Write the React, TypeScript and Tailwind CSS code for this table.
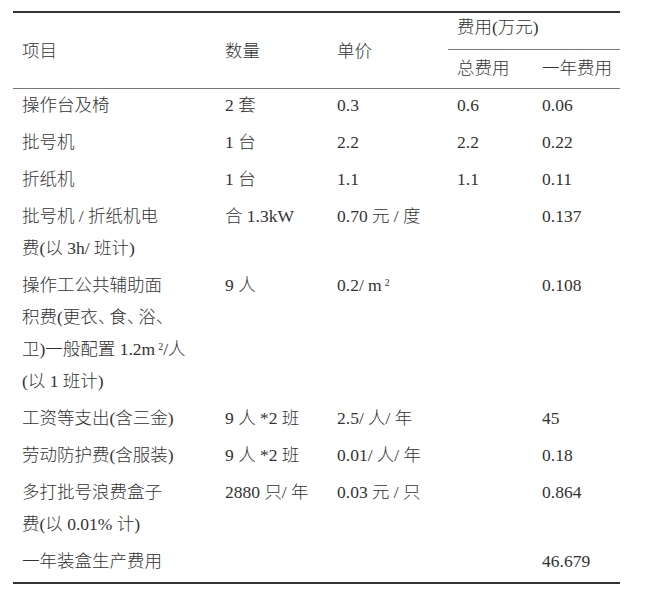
type Row = {
  item: React.ReactNode;
  qty?: React.ReactNode;
  price?: React.ReactNode;
  total?: string;
  year?: string;
};

const Sq = () => <sup className="text-[10px] ml-[3px]">2</sup>;
const Dun = () => <span className="tracking-[-6px]">、</span>;

const rows: Row[] = [
  { item: "操作台及椅", qty: "2 套", price: "0.3", total: "0.6", year: "0.06" },
  { item: "批号机", qty: "1 台", price: "2.2", total: "2.2", year: "0.22" },
  { item: "折纸机", qty: "1 台", price: "1.1", total: "1.1", year: "0.11" },
  {
    item: (
      <>
        批号机 / 折纸机电
        <br />
        费(以 3h/ 班计)
      </>
    ),
    qty: "合 1.3kW",
    price: "0.70 元 / 度",
    year: "0.137",
  },
  {
    item: (
      <>
        操作工公共辅助面
        <br />
        积费(更衣<Dun />食<Dun />浴<Dun />
        <br />
        卫)一般配置 1.2m
        <Sq />
        /人
        <br />
        (以 1 班计)
      </>
    ),
    qty: "9 人",
    price: (
      <>
        0.2/ m
        <Sq />
      </>
    ),
    year: "0.108",
  },
  { item: "工资等支出(含三金)", qty: "9 人 *2 班", price: "2.5/ 人/ 年", year: "45" },
  { item: "劳动防护费(含服装)", qty: "9 人 *2 班", price: "0.01/ 人/ 年", year: "0.18" },
  {
    item: (
      <>
        多打批号浪费盒子
        <br />
        费(以 0.01% 计)
      </>
    ),
    qty: "2880 只/ 年",
    price: "0.03 元 / 只",
    year: "0.864",
  },
  { item: "一年装盒生产费用", year: "46.679" },
];

export default function App() {
  const td = "pl-[9px] pt-0 pb-[5px] align-top whitespace-nowrap";
  const th = "pl-[9px] text-left font-light";
  return (
    <div
      className="w-[646px] h-[594px] bg-white pt-[11px] pl-[13px] text-[#333] text-[17.5px] leading-[32px] font-light"
      style={{ fontFamily: '"Liberation Serif", "Noto Sans CJK SC", serif' }}
    >
      <div className="w-[607px] border-y-2 border-[#333]">
        <table className="w-[607px] table-fixed border-separate border-spacing-0">
          <colgroup>
            <col className="w-[203px]" />
            <col className="w-[112px]" />
            <col className="w-[120px]" />
            <col className="w-[85px]" />
            <col className="w-[87px]" />
          </colgroup>
          <thead>
            <tr>
              <th rowSpan={2} className={`${th} align-middle border-b border-[#777]`}>
                项目
              </th>
              <th rowSpan={2} className={`${th} align-middle border-b border-[#777]`}>
                数量
              </th>
              <th rowSpan={2} className={`${th} align-middle border-b border-[#777]`}>
                单价
              </th>
              <th colSpan={2} className={`${th} pt-0 pb-[8px] leading-[28px] border-b border-[#777]`}>
                费用(万元)
              </th>
            </tr>
            <tr>
              <th className={`${th} pt-[4px] pb-[6px] leading-[28px] border-b border-[#777]`}>总费用</th>
              <th className={`${th} pt-[4px] pb-[6px] leading-[28px] border-b border-[#777]`}>一年费用</th>
            </tr>
          </thead>
          <tbody>
            {rows.map((r, i) => (
              <tr key={i}>
                <td className={td}>{r.item}</td>
                <td className={td}>{r.qty}</td>
                <td className={td}>{r.price}</td>
                <td className={td}>{r.total}</td>
                <td className={td}>{r.year}</td>
              </tr>
            ))}
          </tbody>
        </table>
      </div>
    </div>
  );
}
